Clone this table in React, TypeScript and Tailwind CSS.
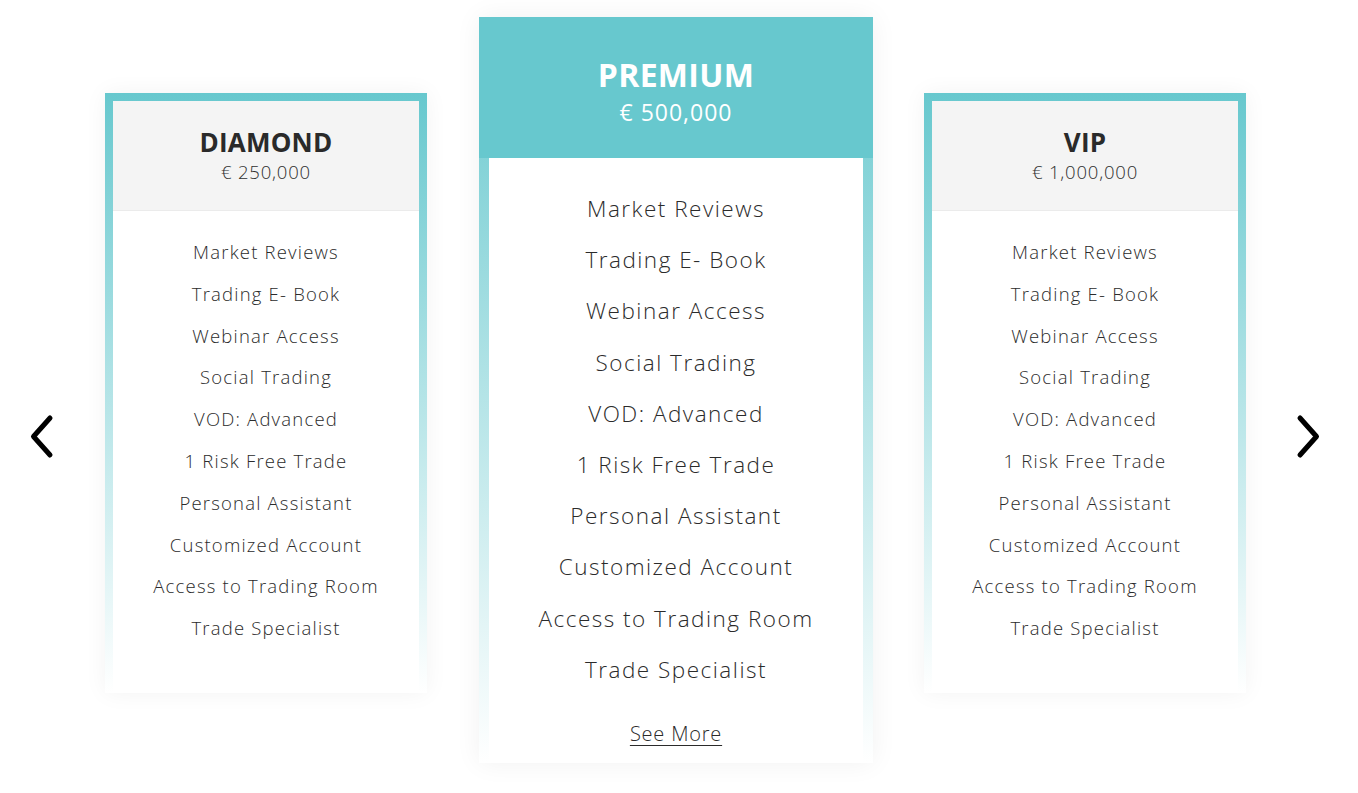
import React from "react";

const features = [
  "Market Reviews",
  "Trading E- Book",
  "Webinar Access",
  "Social Trading",
  "VOD: Advanced",
  "1 Risk Free Trade",
  "Personal Assistant",
  "Customized Account",
  "Access to Trading Room",
  "Trade Specialist",
];

const font = { fontFamily: "'Open Sans', 'Noto Sans', sans-serif" };

function SideCard({ title, price }: { title: string; price: string }) {
  return (
    <div className="mt-[76px] w-[322px] h-[600px] p-[8px] pb-0 bg-linear-to-b from-[#67c8ce] to-[#67c8ce00] shadow-[0_0_22px_rgba(0,0,0,0.05)]">
      <div className="bg-white h-full flex flex-col">
        <div className="h-[110px] bg-[#f4f4f4] border-b border-[#ebebeb] flex flex-col items-center pt-[26px]">
          <div className="text-[26px] leading-[30px] font-bold text-[#2a2a2a] tracking-[0.2px]">{title}</div>
          <div className="mt-[2px] text-[18.5px] leading-[26px] font-light text-[#2f2f2f] tracking-[0.8px]">{price}</div>
        </div>
        <div className="flex flex-col items-center pt-[20px]">
          {features.map((f) => (
            <div key={f} className="text-[18.5px] leading-[41.8px] font-light text-[#2b2b2b] tracking-[1.2px]">
              {f}
            </div>
          ))}
        </div>
      </div>
    </div>
  );
}

function MainCard() {
  return (
    <div className="w-[394px] h-[746px] px-[10px] bg-linear-to-b from-[#67c8ce] to-[#67c8ce00] shadow-[0_0_25px_rgba(0,0,0,0.06)] flex flex-col">
      <div className="-mx-[10px] h-[141px] bg-[#67c8ce] flex flex-col items-center pt-[38px]">
        <div className="text-[32px] leading-[40px] font-bold text-white tracking-[0.3px]">PREMIUM</div>
        <div className="mt-[2px] text-[23px] leading-[30px] font-normal text-white tracking-[1px]">€ 500,000</div>
      </div>
      <div className="bg-white flex-1 flex flex-col items-center pt-[25px]">
        {features.map((f) => (
          <div key={f} className="text-[22.5px] leading-[51.2px] font-light text-[#2b2b2b] tracking-[1.5px]">
            {f}
          </div>
        ))}
        <div className="mt-[25px] text-[20px] leading-[28px] font-light text-[#2b2b2b] tracking-[0.8px] underline decoration-1 underline-offset-[4px]">
          See More
        </div>
      </div>
    </div>
  );
}

function Chevron({ dir }: { dir: "left" | "right" }) {
  return (
    <svg width="26" height="46" viewBox="0 0 26 46" fill="none">
      <path
        d={dir === "left" ? "M20 4 L3.5 22.5 L20 41" : "M6 4 L22.5 22.5 L6 41"}
        stroke="#000"
        strokeWidth="5"
        strokeLinecap="round"
        strokeLinejoin="round"
      />
    </svg>
  );
}

export default function App() {
  return (
    <div className="w-full h-[793px] bg-white overflow-hidden" style={font}>
      <div className="flex items-start pt-[17px]">
        <div className="ml-[30px] mt-[397px]">
          <Chevron dir="left" />
        </div>
        <div className="ml-[49px]">
          <SideCard title="DIAMOND" price="€ 250,000" />
        </div>
        <div className="ml-[52px]">
          <MainCard />
        </div>
        <div className="ml-[51px]">
          <SideCard title="VIP" price="€ 1,000,000" />
        </div>
        <div className="ml-[48px] mt-[397px]">
          <Chevron dir="right" />
        </div>
      </div>
    </div>
  );
}
